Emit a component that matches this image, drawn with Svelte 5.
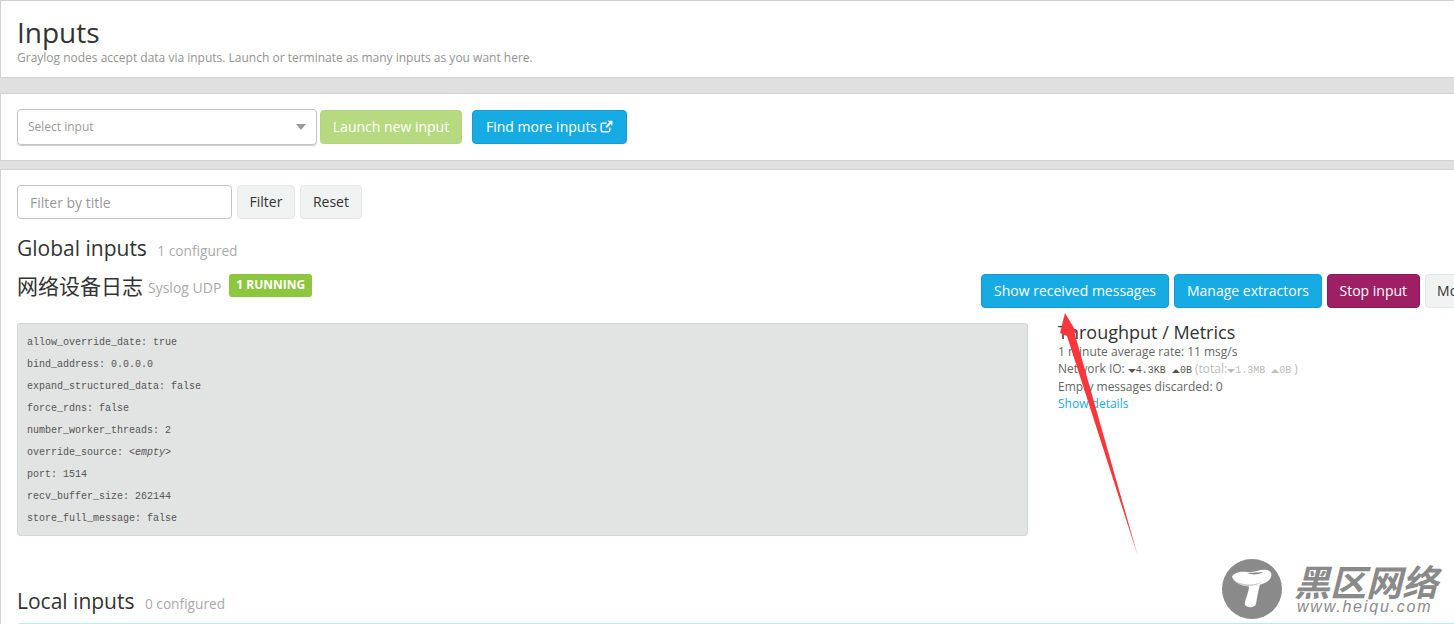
<script>
	const config = [
		['allow_override_date', 'true'],
		['bind_address', '0.0.0.0'],
		['expand_structured_data', 'false'],
		['force_rdns', 'false'],
		['number_worker_threads', '2'],
		['override_source', null],
		['port', '1514'],
		['recv_buffer_size', '262144'],
		['store_full_message', 'false']
	]
</script>

<div class="page">
	<section class="box head">
		<h1>Inputs</h1>
		<p class="lead">Graylog nodes accept data via inputs. Launch or terminate as many inputs as you want here.</p>
	</section>

	<section class="box launch">
		<div class="select">
			<span>Select input</span>
			<i class="caret"></i>
		</div>
		<button class="btn green">Launch new input</button>
		<button class="btn blue find">
			Find more inputs
			<svg class="ext" viewBox="0 0 14 14" aria-hidden="true">
				<path d="M10.5 8v3a1.6 1.6 0 0 1-1.6 1.6H2.9A1.6 1.6 0 0 1 1.3 11V5a1.6 1.6 0 0 1 1.6-1.6H7" fill="none" stroke="currentColor" stroke-width="1.5" />
				<path d="M8 .8h5.4v5.4l-1.9-1.9-4.2 4.3-1.5-1.5 4.2-4.3z" fill="currentColor" />
			</svg>
		</button>
	</section>

	<section class="box main">
		<div class="filter">
			<div class="field">Filter by title</div>
			<button class="btn plain">Filter</button>
			<button class="btn plain reset">Reset</button>
		</div>

		<h2 class="global">Global inputs <small>1 configured</small></h2>

		<div class="input-row">
			<div class="title">
				<span class="name">网络设备日志</span>
				<span class="type">Syslog UDP</span>
				<span class="badge">1 RUNNING</span>
			</div>
			<div class="actions">
				<button class="btn blue">Show received messages</button>
				<button class="btn blue">Manage extractors</button>
				<button class="btn purple">Stop input</button>
				<button class="btn plain">More actions</button>
			</div>
		</div>

		<div class="details">
			<div class="well">
				{#each config as [key, value]}
					<div class="line">{key}: {#if value === null}<em>&lt;empty&gt;</em>{:else}{value}{/if}</div>
				{/each}
			</div>
			<div class="metrics">
				<h3>Throughput / Metrics</h3>
				<div>1 minute average rate: 11 msg/s</div>
				<div>
					Network IO:
					<span class="io"><i class="down"></i>4.3KB <i class="up"></i>0B</span>
					<span class="muted">(total:<span class="io"><i class="down"></i>1.3MB <i class="up"></i>0B</span> )</span>
				</div>
				<div>Empty messages discarded: 0</div>
				<div class="link">Show details</div>
			</div>
		</div>

		<h2 class="local">Local inputs <small>0 configured</small></h2>
		<div class="alert"></div>
	</section>

	<svg class="arrow" viewBox="0 0 1454 624" aria-hidden="true">
		<path d="M1065 313 L1077.5 334 L1074.5 333 L1137.5 555 L1067 336 L1060 333 Z" fill="#f9373a" />
	</svg>

	<div class="mark">
		<svg class="mushroom" viewBox="0 0 60 60" aria-hidden="true">
			<circle cx="30" cy="30" r="30" fill="#8a8a8a" />
			<path d="M10 18 C11 14 18 12 25 13 C32 14 38 10 45 11 C49 12 50 15 49 18 C47 23 41 25 37 26 C28 29 14 27 10 18 Z" fill="#fff" />
			<path d="M12 21 C19 26 31 27 40 23 C34 27 28 28 23 27 C18 26 14 24 12 21 Z" fill="#ccc" />
			<path d="M27 27 L38 26 C36 32 35 40 34 45 C33 49 25 49 23 46 C22 42 27 34 27 27 Z" fill="#fff" />
			<path d="M25 14 C31 14 36 13 41 13 C37 16 30 16 25 14 Z" fill="#8a8a8a" />
		</svg>
		<div class="mark-text">
			<div class="cn">黑区网络</div>
			<div class="url">www.heiqu.com</div>
		</div>
	</div>
</div>

<style>
	:global(body) {
		background: #e0e0e0;
	}

	.page {
		position: relative;
		width: 1454px;
		height: 624px;
		overflow: hidden;
		padding-top: 1px;
		box-sizing: border-box;
		background: #e0e0e0;
		font-family: 'Open Sans', 'Noto Sans CJK SC', sans-serif;
		font-size: 12px;
		color: #666;
	}

	.box {
		width: 1600px;
		margin-left: 1px;
		box-sizing: border-box;
		background: #fff;
		box-shadow: 0 0 0 1px #d1d1d1;
		padding-left: 16px;
	}

	.head {
		height: 76px;
		padding-top: 14px;
	}

	h1 {
		margin: 0;
		font-size: 28px;
		line-height: 34px;
		font-weight: 400;
		color: #333;
	}

	.lead {
		margin: 1px 0 0;
		font-size: 12px;
		line-height: 16px;
		color: #939393;
	}

	.launch {
		height: 66px;
		margin-top: 17px;
		display: flex;
		align-items: center;
	}

	.select {
		width: 300px;
		height: 36px;
		margin-right: 3px;
		padding: 0 10px;
		box-sizing: border-box;
		display: flex;
		align-items: center;
		justify-content: space-between;
		border: 1px solid #c4c4c4;
		border-radius: 4px;
		box-shadow: 0 1px 1px #ccc;
		font-size: 12px;
		color: #9a9a9a;
	}

	.select span {
		margin-bottom: 2px;
	}

	.caret {
		border: 5px solid transparent;
		border-top: 6px solid #999;
		border-bottom: 0;
	}

	.btn {
		height: 34px;
		padding: 0 12px 2px;
		border: 1px solid transparent;
		border-radius: 4px;
		font-family: inherit;
		font-size: 14px;
		white-space: nowrap;
		flex: none;
	}

	.green {
		width: 142px;
		margin-right: 10px;
		padding: 0 0 2px;
		background: #b7da80;
		border-color: #b3d57e;
		color: #fff;
	}

	.blue {
		background: #16ace3;
		border-color: #149cce;
		color: #fff;
	}

	.find {
		width: 155px;
		padding: 0 0 2px;
		display: flex;
		align-items: center;
		justify-content: center;
		gap: 3px;
	}

	.ext {
		width: 13px;
		height: 13px;
	}

	.purple {
		padding: 0 11.5px 2px;
		background: #9e1f63;
		border-color: #8a1b56;
		color: #fff;
	}

	.plain {
		padding: 0 11.5px 2px;
		background: #f1f2f2;
		border-color: #e6e6e6;
		color: #333;
	}

	.plain.reset {
		padding: 0 12px 2px;
	}

	.main {
		height: 470px;
		margin-top: 10px;
		padding-top: 15px;
	}

	.filter {
		display: flex;
		gap: 5px;
		align-items: center;
	}

	.field {
		width: 215px;
		height: 34px;
		padding: 0 12px;
		box-sizing: border-box;
		display: flex;
		align-items: center;
		border: 1px solid #c4c4c4;
		border-radius: 4px;
		font-size: 14px;
		color: #999;
	}

	h2 {
		margin: 0;
		font-size: 21px;
		line-height: 24px;
		font-weight: 400;
		color: #333;
	}

	h2 small {
		margin-left: 5px;
		font-size: 13.7px;
		line-height: 1;
		color: #aaa;
	}

	.global {
		margin-top: 17px;
	}

	.input-row {
		margin-top: 11px;
		display: flex;
		align-items: flex-start;
	}

	.title {
		width: 964px;
		display: flex;
		align-items: center;
		height: 28px;
	}

	.name {
		font-size: 21px;
		color: #333;
	}

	.type {
		margin: 4px 0 0 5px;
		font-size: 14px;
		color: #aaa;
	}

	.badge {
		margin-left: 8px;
		height: 23px;
		padding: 0 7px 1px;
		box-sizing: border-box;
		display: flex;
		align-items: center;
		border-radius: 3px;
		background: #8dc63f;
		color: #fff;
		font-size: 12px;
		font-weight: 700;
	}

	.actions {
		display: flex;
		gap: 5px;
		margin-top: 3px;
	}

	.details {
		margin-top: 15px;
		display: flex;
	}

	.well {
		width: 1011px;
		height: 213px;
		box-sizing: border-box;
		padding: 8px 9px;
		background: #e2e3e3;
		border: 1px solid #d6d6d6;
		border-radius: 3px;
		font-family: 'Liberation Mono', monospace;
		font-size: 10px;
		line-height: 22px;
		color: #555;
	}

	.metrics {
		margin-left: 30px;
		margin-top: -1px;
		line-height: 17.3px;
		font-size: 12px;
	}

	h3 {
		margin: 0 0 1px;
		font-size: 18px;
		line-height: 20px;
		font-weight: 400;
		color: #333;
	}

	.io {
		font-family: 'Liberation Mono', monospace;
		font-size: 10px;
		line-height: 0;
		color: #555;
	}

	.muted,
	.muted .io {
		color: #bbb;
	}

	.down,
	.up {
		display: inline-block;
		border: 4px solid transparent;
		vertical-align: middle;
	}

	.down {
		border-top: 4px solid currentColor;
		border-bottom: 0;
	}

	.up {
		border-bottom: 4px solid currentColor;
		border-top: 0;
	}

	.link {
		color: #16ace3;
	}

	.local {
		margin-top: 53px;
	}

	.alert {
		margin-top: 10px;
		width: 1500px;
		height: 10px;
		background: #fff;
		border-top: 1px solid #bce8f1;
		border-radius: 4px;
	}

	.arrow {
		position: absolute;
		inset: 0;
		width: 1454px;
		height: 624px;
		pointer-events: none;
	}

	.mark {
		position: absolute;
		left: 1222px;
		top: 559px;
		display: flex;
		gap: 12px;
		color: #8a8a8a;
	}

	.mushroom {
		width: 60px;
		height: 60px;
	}

	.mark-text {
		margin-top: 3px;
		font-family: 'Noto Sans CJK SC', sans-serif;
		font-style: italic;
		font-weight: 700;
	}

	.cn {
		font-size: 36px;
		line-height: 36px;
	}

	.url {
		font-family: 'Liberation Sans', sans-serif;
		font-size: 16px;
		line-height: 18px;
		letter-spacing: 1.8px;
		margin-left: 3px;
		font-weight: 400;
	}
</style>
